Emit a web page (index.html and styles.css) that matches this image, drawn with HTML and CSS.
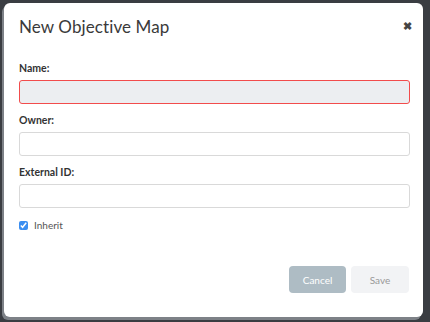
FILE: index.html
```html
<!DOCTYPE html>
<html lang="en">

<head>
    <meta charset="UTF-8">
    <title>New Objective Map</title>
    <link rel="stylesheet" href="styles.css">
</head>

<body>
    <div class="modal">
        <div class="modal-header">
            <h3>New Objective Map</h3>
            <span class="close">&#10006;</span>
        </div>
        <form class="modal-body">
            <label class="field-label">Name:</label>
            <input class="field-input invalid" type="text">
            <label class="field-label">Owner:</label>
            <input class="field-input" type="text">
            <label class="field-label">External ID:</label>
            <input class="field-input" type="text">
            <label class="check">
                <input type="checkbox" checked>
                <span>Inherit</span>
            </label>
        </form>
        <div class="modal-footer">
            <button class="btn btn-cancel">Cancel</button>
            <button class="btn btn-save">Save</button>
        </div>
    </div>
</body>

</html>
```

FILE: styles.css
```css
*,
*:before,
*:after {
    box-sizing: border-box;
    margin: 0;
    padding: 0;
}

html,
body {
    width: 100%;
    height: 100%;
    overflow: hidden;
}

body {
    background: #3a3d42;
    font-family: Lato, "Open Sans", sans-serif;
    color: #333;
    padding: 3px 7px 0 4px;
}

.modal {
    height: 314px;
    background: #fff;
    border-radius: 6px;
    box-shadow: -2px 3px 0 #7d8187;
    display: flex;
    flex-direction: column;
}

.modal-header {
    display: flex;
    justify-content: space-between;
    align-items: flex-start;
    padding: 13px 11px 0 15px;
    height: 50px;
}

.modal-header h3 {
    font-size: 17px;
    font-weight: 400;
    color: #3a3a3a;
    letter-spacing: 0.1px;
}

.close {
    font-size: 11px;
    font-weight: bold;
    color: #444;
    margin-top: 3px;
}

.modal-body {
    display: flex;
    flex-direction: column;
    padding: 9px 13px 0 15px;
}

.field-label {
    font-size: 10.5px;
    line-height: 12px;
    font-weight: 700;
    color: #333;
    margin-bottom: 6px;
}

.field-input {
    height: 24px;
    border: 1px solid #d9d9d9;
    border-radius: 3px;
    background: #fff;
    margin-bottom: 10px;
}

.field-input.invalid {
    background: #eceef1;
    border-color: #f24c4c;
}

.check {
    display: flex;
    align-items: center;
    gap: 6px;
    font-size: 10px;
    line-height: 12px;
    color: #555;
    margin-top: 1px;
}

.check input {
    width: 9px;
    height: 9px;
    accent-color: #3b8ef0;
}

.modal-footer {
    margin-top: auto;
    display: flex;
    justify-content: flex-end;
    gap: 5px;
    padding: 0 14px 24px 0;
}

.btn {
    height: 27px;
    border: none;
    border-radius: 4px;
    font-family: Lato, sans-serif;
    font-size: 10px;
}

.btn-cancel {
    width: 57px;
    background: #aebcc4;
    color: #fff;
}

.btn-save {
    width: 58px;
    background: #f2f3f5;
    color: #999;
}
```
